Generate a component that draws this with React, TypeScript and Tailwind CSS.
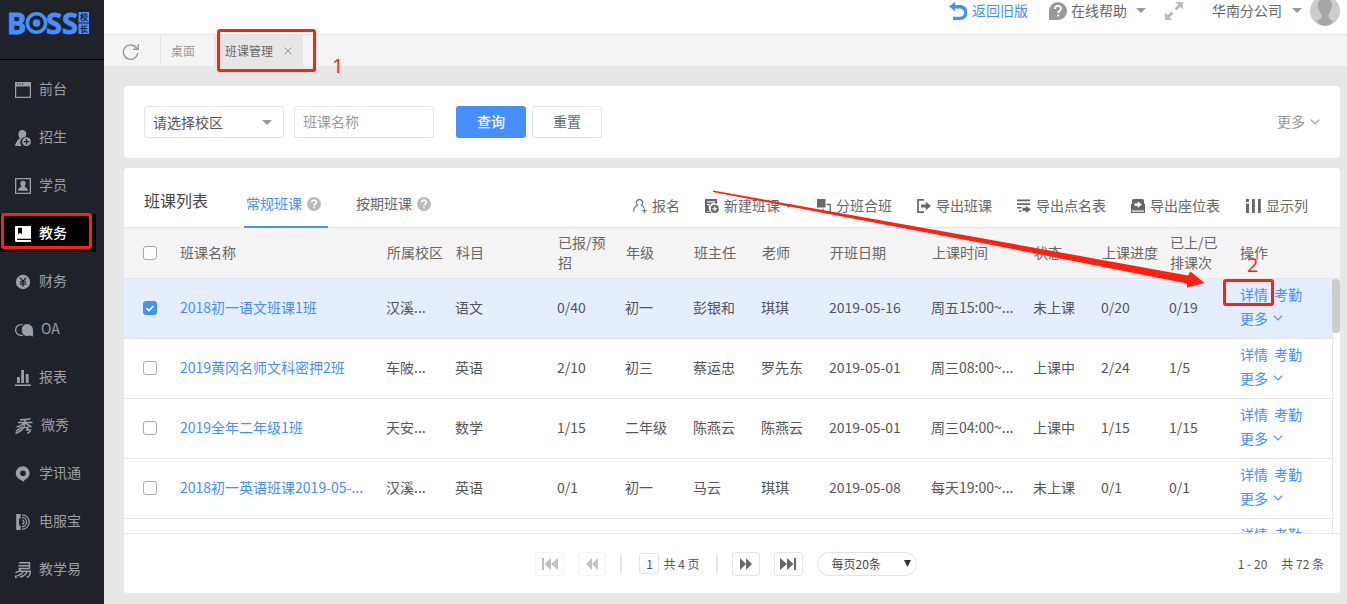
import type { ReactNode } from 'react';

type IconProps = { children: ReactNode; className?: string; box?: string };

function Icon({ children, className = 'w-4 h-4', box = '0 0 16 16' }: IconProps) {
  return (
    <svg viewBox={box} className={`shrink-0 ${className}`} fill="currentColor" aria-hidden="true">
      {children}
    </svg>
  );
}

const navItems = [
  {
    label: '前台',
    icon: (
      <Icon>
        <path fillRule="evenodd" d="M0 0h16v16H0zM1.2 4.6v10.2h13.6V4.6zM2 1.4v1.2h1.4V1.4zM4.5 1.4v1.2h1.4V1.4zM7 1.4v1.2h1.4V1.4z" />
      </Icon>
    ),
  },
  {
    label: '招生',
    icon: (
      <Icon>
        <path d="M7.3 0C4.8 0 3.4 1.8 3.4 4.3c0 1.6.6 3 1.5 3.9C3.500 9.300 1 11 0 16h6.800a5.300 5.300 0 0 1 3.400-9c.700-.800 1.100-1.800 1.100-2.900C11.300 1.700 9.800 0 7.300 0z" />
        <path fillRule="evenodd" d="M11.500 7.300a4.400 4.400 0 1 0 0 8.800 4.400 4.400 0 0 0 0-8.800zm-.6 1.600h1.300v2.100h2.100v1.300h-2.100v2.100h-1.300v-2.100H8.800V11h2.100z" />
      </Icon>
    ),
  },
  {
    label: '学员',
    icon: (
      <Icon>
        <path fillRule="evenodd" d="M0 0h16v16H0zM1.300 1.300v13.400h13.400V1.300z" />
        <path d="M8 2.800c-1.700 0-2.700 1.200-2.700 2.800 0 1.200.4 2.100 1.100 2.700-.2 1.200-3.200 1.200-3.400 4.500h10c-.2-3.300-3.200-3.300-3.400-4.500.7-.6 1.100-1.500 1.100-2.700C10.700 4 9.700 2.800 8 2.800z" />
      </Icon>
    ),
  },
  {
    label: '教务',
    active: true,
    icon: (
      <Icon>
        <path fillRule="evenodd" d="M1 0h15v12.800H2v1.200h14v2H1.500A1.500 1.500 0 0 1 0 14.500V1a1 1 0 0 1 1-1zm2 1.800v6.700l2-1.800 2 1.800V1.800z" />
      </Icon>
    ),
  },
  {
    label: '财务',
    icon: (
      <Icon>
        <circle cx="8" cy="8" r="7.2" />
        <path d="M5 3.600l3 3.800 3-3.800M4.800 7.800h6.400M4.800 10.200h6.400M8 7.400v5.400" stroke="#1f2329" strokeWidth="1.300" fill="none" />
      </Icon>
    ),
  },
  {
    label: 'OA',
    icon: (
      <Icon className="w-[18px] h-4" box="0 0 18 16">
        <path d="M7.500 2.600H6a5.400 5.400 0 0 0 0 10.800h2" stroke="currentColor" strokeWidth="1.300" fill="none" />
        <path d="M12 2a6 6 0 1 0 0 12c1 0 1.800-.2 2.600-.6L18 14.500V8a6 6 0 0 0-6-6z" />
        <path d="M8.400 2.800c-2.700 2.800-2.700 7.500 0 10.400" stroke="#1f2329" strokeWidth=".9" fill="none" />
      </Icon>
    ),
  },
  {
    label: '报表',
    icon: (
      <Icon>
        <path d="M2 7h2.800v6H2zM6.200 0H9v13H6.200zM10.800 4h2.800v9h-2.800zM0 14.500h16V16H0z" />
      </Icon>
    ),
  },
  {
    label: '微秀',
    icon: (
      <Icon className="w-[18px] h-4" box="0 0 18 16">
        <path
          d="M15.500.8C12 1.600 8 1.800 5 1.800M3 4.500h14.500M10.500 1.800L9 8.500M9.500 4.800C7 7.300 4.500 8.400 1.500 9M10.500 4.800c1.500 2 3.400 3.200 6 4M5.500 9.500h7.500l-1.200 2.400h3.700c-.6 2-1.300 3.300-3.500 3.300M8.500 9.800C6.500 12.600 4 14.500.5 15.500M5.500 9.500C4.500 11 3 12.500.8 13"
          stroke="currentColor"
          strokeWidth="1.500"
          fill="none"
        />
      </Icon>
    ),
  },
  {
    label: '学讯通',
    icon: (
      <Icon>
        <path fillRule="evenodd" d="M8 .2a7 7 0 0 0-2.200 13.700L9.200 16v-2A7 7 0 0 0 8 .2zM8 4.500a2.800 2.800 0 1 1 0 5.600 2.800 2.800 0 0 1 0-5.600z" />
      </Icon>
    ),
  },
  {
    label: '电服宝',
    icon: (
      <Icon>
        <path d="M1.200 0h4.400v4.500H4.100v7h1.500V16H1.200z" />
        <path d="M7 6a2 2 0 0 1 0 4M7 3.400a4.600 4.600 0 0 1 0 9.200M7 .8a7.200 7.200 0 0 1 0 14.400" stroke="currentColor" strokeWidth="1.200" fill="none" />
      </Icon>
    ),
  },
  {
    label: '教学易',
    icon: (
      <Icon>
        <path
          d="M4 .8h10.500v5.700H3.500M3.500 3.700h11M5.500 7C4.500 9 3 10 .5 10.800M4 9.200h11.200c0 4-.5 6-3.700 6M8 9.500C6.800 12 4.400 13.400 1.500 14M12 9.500c-1 2.800-3.500 4.700-7 5.700"
          stroke="currentColor"
          strokeWidth="1.500"
          fill="none"
        />
        <path d="M0 13l2.500 3H0z" />
      </Icon>
    ),
  },
];

const tools = [
  {
    label: '报名',
    icon: (
      <Icon className="w-[14px] h-[14px]" box="0 0 14 14">
        <path d="M6.500.6a3 3 0 0 1 1.800 5.500C10 6.900 10.800 8 11 9M6.500.6a3 3 0 0 0-1.800 5.500C2.300 7 .8 9.200.6 12.600M11.300 9.500v4.500M9 11.700h4.800" stroke="currentColor" strokeWidth="1.100" fill="none" />
      </Icon>
    ),
  },
  {
    label: '新建班课',
    caret: true,
    icon: (
      <Icon className="w-[14px] h-[14px]" box="0 0 14 14">
        <path fillRule="evenodd" d="M0 0h12v5.300A4.800 4.800 0 0 0 5.300 12.500H1.500v.5h4.200l.8 1H1a1 1 0 0 1-1-1zM2 2.200v1.200h8V2.200zM2 5v1.200h4V5z" />
        <path fillRule="evenodd" d="M9.800 5.800a4.100 4.100 0 1 0 0 8.200 4.100 4.100 0 0 0 0-8.200zm-.6 1.700h1.200v1.800h1.800v1.200h-1.800v1.800H9.200v-1.800H7.400V9.300h1.800z" />
      </Icon>
    ),
  },
  {
    label: '分班合班',
    icon: (
      <Icon className="w-[14px] h-[14px]" box="0 0 14 14">
        <path d="M0 0h8.500v8.500H0z" />
        <path d="M9.500 5.500h3.800v7.500H6V9.800" stroke="currentColor" strokeWidth="1.300" fill="none" />
      </Icon>
    ),
  },
  {
    label: '导出班课',
    icon: (
      <Icon className="w-[14px] h-[14px]" box="0 0 14 14">
        <path d="M7 .9H1v12.200h6" stroke="currentColor" strokeWidth="1.700" fill="none" />
        <path d="M4 5.500h4.800V2.800L14 7l-5.200 4.200V8.500H4z" />
      </Icon>
    ),
  },
  {
    label: '导出点名表',
    icon: (
      <Icon className="w-[14px] h-[14px]" box="0 0 14 14">
        <path d="M0 .5h13v1.800H0zM0 4.200h13V6H0zM0 8h4.500v1.500H0zM2 11.500h2.500V13H2zM5.500 8.800h3.300V6.800L14 10.400 8.800 14v-2.200H5.500z" />
      </Icon>
    ),
  },
  {
    label: '导出座位表',
    icon: (
      <Icon className="w-[14px] h-[14px]" box="0 0 14 14">
        <path fillRule="evenodd" d="M2.500 0h9A1.500 1.500 0 0 1 13 1.500V10a1.500 1.500 0 0 1-1.500 1.500h-9A1.500 1.500 0 0 1 1 10V1.500A1.500 1.500 0 0 1 2.500 0zM3.500 4.200v2.800h3.300v2L10.800 5.600 6.800 2.200v2z" />
        <path d="M.6 5v8.300h12.800V5" stroke="currentColor" strokeWidth="1.200" fill="none" />
      </Icon>
    ),
  },
  {
    label: '显示列',
    icon: (
      <Icon className="w-4 h-[14px]" box="0 0 16 14">
        <path d="M1 0h3v3H1zM1 4.500h3V14H1zM7 0h2.800v14H7zM13 0h2.800v14H13z" />
      </Icon>
    ),
  },
];

const columns = ['所属校区', '科目', '已报/预招', '年级', '班主任', '老师', '开班日期', '上课时间', '状态', '上课进度', '已上/已排课次', '操作'];

const rows = [
  { name: '2018初一语文班课1班', checked: true, cells: ['汉溪...', '语文', '0/40', '初一', '彭银和', '琪琪', '2019-05-16', '周五15:00~...', '未上课', '0/20', '0/19'] },
  { name: '2019黄冈名师文科密押2班', cells: ['车陂...', '英语', '2/10', '初三', '蔡运忠', '罗先东', '2019-05-01', '周三08:00~...', '上课中', '2/24', '1/5'] },
  { name: '2019全年二年级1班', cells: ['天安...', '数学', '1/15', '二年级', '陈燕云', '陈燕云', '2019-05-01', '周三04:00~...', '上课中', '1/15', '1/15'] },
  { name: '2018初一英语班课2019-05-...', cells: ['汉溪...', '英语', '0/1', '初一', '马云', '琪琪', '2019-05-08', '每天19:00~...', '未上课', '0/1', '0/1'] },
  { name: '', cells: ['', '', '', '', '', '', '', '', '', '', ''] },
];

function Caret({ className = 'w-[10px] h-[5px] text-[#999]' }: { className?: string }) {
  return (
    <Icon className={className} box="0 0 10 5">
      <path d="M0 0h10L5 5z" />
    </Icon>
  );
}

function Chevron() {
  return (
    <Icon className="w-[10px] h-[6px]" box="0 0 10 6">
      <path d="M.8.6L5 4.800 9.200.6" stroke="currentColor" strokeWidth="1.200" fill="none" />
    </Icon>
  );
}

function Help() {
  return (
    <Icon className="w-[14px] h-[14px] text-[#bbb]" box="0 0 14 14">
      <circle cx="7" cy="7" r="7" />
      <path d="M4.800 5.500c0-3 4.500-3 4.500-.3C9.300 6.800 7 6.800 7 8.600M7 9.700v1.600" stroke="#fff" strokeWidth="1.600" fill="none" />
    </Icon>
  );
}

function Checkbox({ label, checked = false }: { label: string; checked?: boolean }) {
  return (
    <span className="relative block w-[14px] h-[14px]">
      <input
        type="checkbox"
        aria-label={label}
        defaultChecked={checked}
        className="peer block w-[14px] h-[14px] appearance-none rounded-[3px] border border-[#aaa] bg-white checked:border-[#478ffc] checked:bg-[#478ffc]"
      />
      <svg viewBox="0 0 14 14" className="pointer-events-none absolute inset-0 hidden peer-checked:block" aria-hidden="true">
        <path d="M3.500 7l2.500 2.500 4.500-4.500" stroke="#fff" strokeWidth="1.700" fill="none" />
      </svg>
    </span>
  );
}

function Logo() {
  return (
    <svg viewBox="0 0 104 59" className="block h-[59px] w-[104px]" fill="#478ffc" role="img" aria-label="BOSS校长">
      <g fontFamily="'Noto Sans', sans-serif" fontWeight="700" fontSize="29" stroke="#478ffc" strokeWidth=".8">
        <text x="7" y="33.500">B</text>
        <text x="46" y="33.500">SS</text>
      </g>
      <circle cx="36.500" cy="23" r="9.200" fill="none" stroke="#478ffc" strokeWidth="3.600" />
      <circle cx="36.500" cy="23" r="3.800" />
      <path d="M78.500 12H89v10.600H78.500zM78.500 23.600H89V34H78.500z" />
      <g fontFamily="'Noto Sans CJK SC', sans-serif" fontWeight="700" fontSize="8" fill="#1f2329">
        <text x="80" y="20.400">校</text>
        <text x="80" y="32">长</text>
      </g>
    </svg>
  );
}

function Sidebar() {
  return (
    <aside className="w-[104px] shrink-0 bg-[#1f2329] text-[#9b9fa6]">
      <div className="h-[60px] border-b border-black">
        <Logo />
      </div>
      <nav className="mt-[5px]">
        {navItems.map((item) => (
          <a key={item.label} href="#" className="flex h-12 items-center">
            <span
              className={
                item.active
                  ? 'flex h-[38px] w-24 items-center gap-2 bg-black pt-0.5 pl-[15px] font-medium text-white'
                  : 'flex h-[38px] w-24 items-center gap-2 pt-0.5 pl-[15px]'
              }
            >
              {item.icon}
              <span className="pb-1">{item.label}</span>
            </span>
          </a>
        ))}
      </nav>
    </aside>
  );
}

function TopBar() {
  return (
    <header className="h-[35px] shrink-0 overflow-hidden border-b border-[#e6e6e6] bg-white">
      <div className="flex h-[21px] items-center justify-end pr-[7px] text-[#666]">
        <a href="#" className="flex items-center gap-[5px] text-[#478ffc]">
          <Icon className="w-[18px] h-[18px]" box="0 0 18 18">
            <path d="M0 4.500L6 0v3h5.200a7.300 7.300 0 0 1 0 15H4v-3.200h7a4 4 0 0 0 0-8.300H6V9z" />
          </Icon>
          <span className="pb-0.5">返回旧版</span>
        </a>
        <button type="button" className="ml-[21px] flex items-center gap-1">
          <Icon className="w-[18px] h-[18px] text-[#999]" box="0 0 18 18">
            <path d="M9 0a9 9 0 1 1 0 18H0V9a9 9 0 0 1 9-9z" />
            <path d="M6 7c0-4 6-4 6-.4C12 9 9.200 8.800 9.200 11M9.200 12.500v2" stroke="#fff" strokeWidth="1.800" fill="none" />
          </Icon>
          <span className="pr-[5px] pb-0.5">在线帮助</span>
          <Caret />
        </button>
        <button type="button" aria-label="全屏" className="ml-[19px] text-[#bbb]">
          <Icon className="w-[18px] h-[18px]" box="0 0 18 18">
            <path d="M10.500 0H18v7.500l-2.700-2.700-3.800 3.700-2-2 3.700-3.800zM7.500 18H0v-7.500l2.700 2.700 3.800-3.700 2 2-3.700 3.800z" />
          </Icon>
        </button>
        <button type="button" className="ml-[29px] flex items-center gap-[10px]">
          <span className="pb-0.5">华南分公司</span>
          <Caret />
        </button>
        <svg viewBox="0 0 30 30" className="ml-2 h-[30px] w-[30px] shrink-0 rounded-full bg-[#ccc]" role="img" aria-label="头像">
          <path d="M15 3c-5 0-7.500 2.500-7 7 .3 4 2 6 3.500 8.500.3 4-.5 4.500-4.500 6.500 2 3 5 5 8 5s6-2 8-5c-4-2-4.800-2.500-4.500-6.500 1.500-2.500 3.200-4.500 3.500-8.500.5-4.500-2-7-7-7z" fill="#a6a6a6" />
        </svg>
      </div>
    </header>
  );
}

function TabStrip() {
  return (
    <div className="flex h-[31px] shrink-0 bg-[#f4f4f4] text-xs text-[#999]">
      <button type="button" aria-label="刷新" className="flex w-[57px] items-center border-r border-[#e4e4e4] pt-0.5 pl-[18px]">
        <Icon className="w-[17px] h-[17px]" box="0 0 17 17">
          <path d="M14.800 5.500A7.200 7.200 0 1 0 15.700 10M16.200 1v5.200H11" stroke="#999" strokeWidth="1.400" fill="none" />
        </Icon>
      </button>
      <a href="#" className="flex items-center pr-[19px] pl-[10px]">
        桌面
      </a>
      <div className="flex items-center gap-[11px] bg-[#e6e6e6] px-[11px] text-[#666]">
        班课管理
        <button type="button" aria-label="关闭" className="text-[#999]">
          <Icon className="w-2 h-2" box="0 0 8 8">
            <path d="M.5.500l7 7M7.500.500l-7 7" stroke="currentColor" strokeWidth="1" />
          </Icon>
        </button>
      </div>
    </div>
  );
}

function Filters() {
  return (
    <form className="flex h-[72px] shrink-0 items-center rounded bg-white px-5">
      <div className="relative">
        <select aria-label="校区" className="h-8 w-[140px] appearance-none rounded-[3px] border border-[#e4e4e4] bg-white pl-2 text-[#555]">
          <option>请选择校区</option>
        </select>
        <span className="pointer-events-none absolute inset-y-0 right-3 flex items-center">
          <Caret />
        </span>
      </div>
      <input
        type="text"
        aria-label="班课名称"
        placeholder="班课名称"
        className="ml-[10px] h-8 w-[140px] rounded-[3px] border border-[#e4e4e4] pb-0.5 pl-2 placeholder:text-[#999]"
      />
      <button type="button" className="ml-[22px] h-8 w-[70px] rounded-[3px] bg-[#478ffc] pb-0.5 font-medium text-white">
        查询
      </button>
      <button type="button" className="ml-[6px] h-8 w-[70px] rounded-[3px] border border-[#e4e4e4] pb-0.5 text-[#666]">
        重置
      </button>
      <button type="button" className="ml-auto flex items-center gap-[5px] text-[#999]">
        <span className="pb-0.5">更多</span>
        <Chevron />
      </button>
    </form>
  );
}

function ClassTable() {
  return (
    <div className="flex min-h-0 flex-1 overflow-hidden">
      <div className="min-w-0 flex-1">
        <table className="w-full table-fixed text-left whitespace-nowrap text-[#555]">
          <colgroup>
            <col className="w-12" />
            <col />
            <col className="w-[69px]" />
            <col className="w-[102px]" />
            <col className="w-[68px]" />
            <col className="w-[68px]" />
            <col className="w-[68px]" />
            <col className="w-[68px]" />
            <col className="w-[102px]" />
            <col className="w-[102px]" />
            <col className="w-[68px]" />
            <col className="w-[68px]" />
            <col className="w-[70px]" />
            <col className="w-[101px]" />
          </colgroup>
          <thead>
            <tr className="h-[50px] border-b border-[#e6e6e6] bg-[#f4f4f4] text-[#666]">
              <th className="pl-[19px]">
                <Checkbox label="全选" />
              </th>
              <th className="pb-0.5 pl-2 font-normal">班课名称</th>
              {columns.map((title) => (
                <th key={title} className={title.includes('/') ? 'pr-1 pb-0.5 pl-[9px] font-normal whitespace-normal' : 'pb-0.5 pl-[9px] font-normal'}>
                  {title}
                </th>
              ))}
            </tr>
          </thead>
          <tbody>
            {rows.map((row, i) => (
              <tr key={i} className={row.checked ? 'h-[60px] border-b border-[#e6e6e6] bg-[#e4eeff]' : 'h-[60px] border-b border-[#e6e6e6]'}>
                <td className="pl-[19px]">
                  <Checkbox label={row.name || '选择'} checked={row.checked} />
                </td>
                <td className="truncate pb-0.5 pl-2">
                  <a href="#" className="text-[#478ffc]">
                    {row.name}
                  </a>
                </td>
                {row.cells.map((cell, j) => (
                  <td key={j} className="pb-0.5 pl-2">
                    {cell}
                  </td>
                ))}
                <td className="pb-1 pl-[9px] leading-6 text-[#478ffc]">
                  <div className="flex gap-[6px]">
                    <a href="#">详情</a>
                    <a href="#">考勤</a>
                  </div>
                  <button type="button" className="flex items-center gap-[5px]">
                    更多
                    <Chevron />
                  </button>
                </td>
              </tr>
            ))}
          </tbody>
        </table>
      </div>
      <div className="flex w-2 shrink-0 flex-col">
        <div className="h-[51px] border-b border-[#e6e6e6] bg-[#f4f4f4]" />
        <div className="flex-1 border-l border-[#e6e6e6]">
          <div className="-ml-px h-[54px] rounded bg-[#ccc]" />
        </div>
      </div>
    </div>
  );
}

function Pagination() {
  const button = 'flex h-6 items-center justify-center rounded-[3px] border border-[#e4e4e4] text-[#666]';
  return (
    <footer className="grid h-[60px] shrink-0 grid-cols-[1fr_auto_1fr] items-center border-t border-[#e6e6e6] pr-4 pl-1 text-xs text-[#555]">
      <div className="col-start-2 flex items-center">
        <button type="button" aria-label="首页" disabled className={`${button} w-[29px] opacity-40`}>
          <Icon className="w-4 h-3" box="0 0 16 12">
            <path d="M0 0h2v12H0zM9 0v12L2.500 6zM16 0v12L9 6z" />
          </Icon>
        </button>
        <button type="button" aria-label="上一页" disabled className={`${button} ml-[14px] w-7 opacity-40`}>
          <Icon className="w-3 h-3" box="0 0 12 12">
            <path d="M6 0v12L0 6zM12 0v12L6 6z" />
          </Icon>
        </button>
        <span className="ml-[14px] h-[18px] w-[2px] bg-[#e4e4e4]" />
        <input aria-label="页码" defaultValue="1" className="mr-1 ml-[17px] h-[21px] w-5 rounded-[3px] border border-[#e4e4e4] text-center" />
        共 4 页
        <span className="ml-4 h-[18px] w-[2px] bg-[#e4e4e4]" />
        <button type="button" aria-label="下一页" className={`${button} ml-[14px] w-7`}>
          <Icon className="w-3 h-3" box="0 0 12 12">
            <path d="M0 0v12l6-6zM6 0v12l6-6z" />
          </Icon>
        </button>
        <button type="button" aria-label="末页" className={`${button} ml-[14px] w-[29px]`}>
          <Icon className="w-4 h-3" box="0 0 16 12">
            <path d="M0 0v12l7-6zM7 0v12l6.500-6zM14 0h2v12h-2z" />
          </Icon>
        </button>
        <div className="relative ml-[14px]">
          <select aria-label="每页条数" className="block h-6 w-[100px] appearance-none rounded-full border border-[#e4e4e4] bg-white pl-[14px] text-[#444]">
            <option>每页20条</option>
          </select>
          <span className="pointer-events-none absolute inset-y-0 right-[6px] flex items-center">
            <Icon className="w-[7px] h-[7px] text-[#333]" box="0 0 7 7">
              <path d="M0 0h7L3.500 7z" />
            </Icon>
          </span>
        </div>
      </div>
      <div className="flex justify-end gap-[14px]">
        <span>1 - 20</span>
        <span>共 72 条</span>
      </div>
    </footer>
  );
}

// red guide marks drawn over the page
function Marks() {
  return (
    <div className="pointer-events-none absolute top-0 left-0 font-['Open_Sans',sans-serif] text-xl leading-5 text-[#ff2010]">
      <div className="absolute top-[29px] left-[217px] h-[43px] w-[99px] rounded-[3px] border-3 border-current" />
      <span className="absolute top-[56px] left-[332px]">1</span>
      <div className="absolute top-[213px] left-[1px] h-9 w-[91px] rounded-[3px] border-3 border-current" />
      <div className="absolute top-[279px] left-[1223px] h-[27px] w-[51px] rounded-[3px] border-3 border-current" />
      <span className="absolute top-[255px] left-[1247px]">2</span>
      <svg className="absolute top-[190px] left-[712px]" width="494" height="100" viewBox="712 190 494 100" fill="currentColor" aria-hidden="true">
        <path d="M713 190.500L1000 241.500L1188 275.500L1190.500 271.500L1204.500 283L1187 287.500L1187 283.500L1000 246.500L713 192z" />
      </svg>
    </div>
  );
}

export default function App() {
  return (
    <div className="relative flex h-screen overflow-hidden bg-[#e8e8e8] font-['Noto_Sans_CJK_SC',sans-serif] text-sm">
      <Sidebar />
      <div className="flex min-w-0 flex-1 flex-col">
        <TopBar />
        <TabStrip />
        <main className="flex min-h-0 flex-1 flex-col gap-[10px] pt-5 pr-[7px] pb-[11px] pl-5">
          <Filters />
          <section className="flex min-h-0 flex-1 flex-col overflow-hidden rounded bg-white">
            <div className="flex h-[60px] shrink-0 border-b border-[#e6e6e6] pr-8 pl-5 text-[#666]">
              <h1 className="mt-5 text-base text-[#444]">班课列表</h1>
              <div className="ml-9 flex gap-[26px]">
                <button type="button" className="flex h-[60px] items-center gap-[5px] border-b-2 border-[#478ffc] pt-[13px] pr-[7px] pl-[2px] text-[#478ffc]">
                  <span className="pb-0.5">常规班课</span>
                  <Help />
                </button>
                <button type="button" className="flex h-[60px] items-center gap-[5px] pt-[11px] pr-[7px] pl-[2px]">
                  <span className="pb-0.5">按期班课</span>
                  <Help />
                </button>
              </div>
              <div className="ml-auto flex items-center gap-[25px] pt-4">
                {tools.map((tool) => (
                  <button key={tool.label} type="button" className="flex items-center gap-[5px]">
                    {tool.icon}
                    <span className="pb-0.5">{tool.label}</span>
                    {tool.caret && <Caret className="w-[7px] h-1 text-[#666]" />}
                  </button>
                ))}
              </div>
            </div>
            <ClassTable />
            <Pagination />
          </section>
        </main>
      </div>
      <Marks />
    </div>
  );
}
